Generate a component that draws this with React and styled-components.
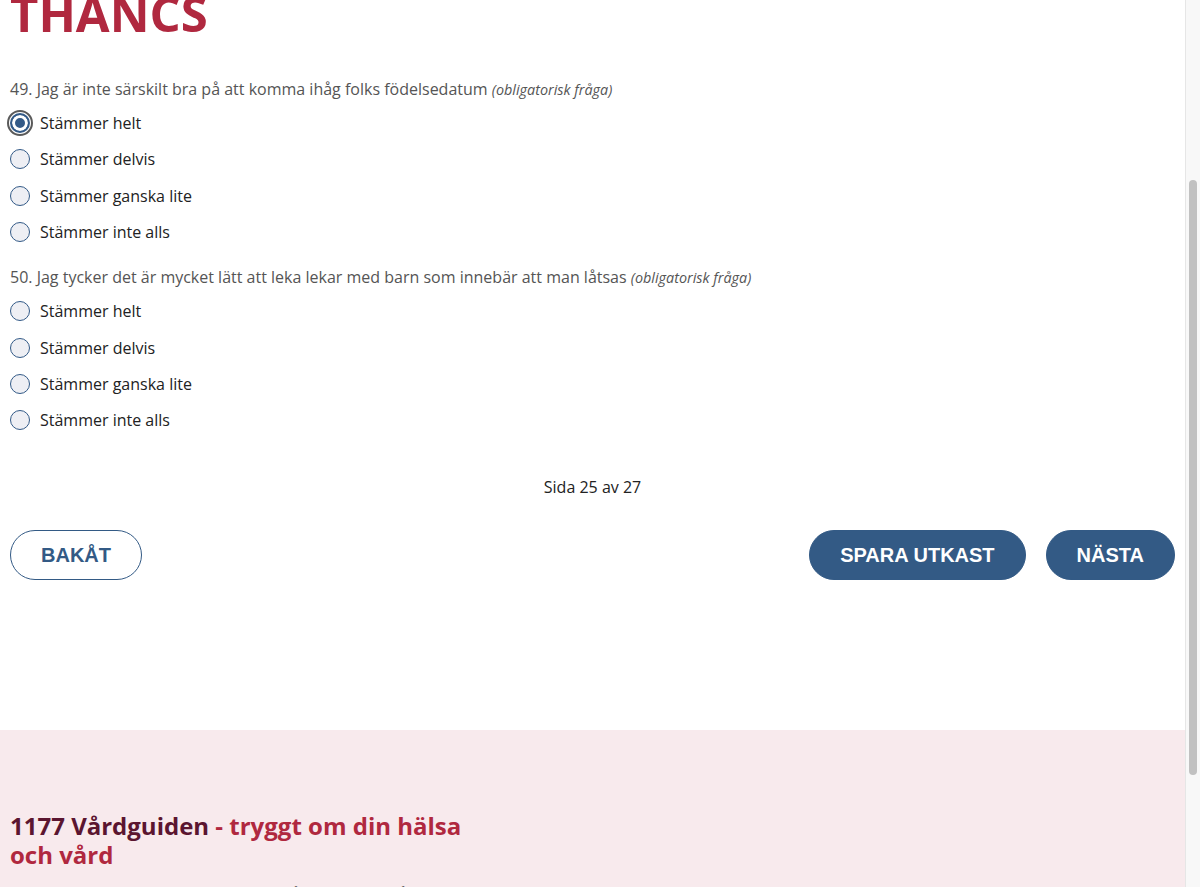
import styled, { createGlobalStyle } from 'styled-components';

const GlobalStyle = createGlobalStyle`
  html, body {
    margin: 0;
    height: 100%;
    overflow: hidden;
    background: #fff;
    font-family: 'Open Sans', 'Liberation Sans', sans-serif;
  }
  * { box-sizing: border-box; }
`;

const questions = [
  {
    number: 49,
    text: 'Jag är inte särskilt bra på att komma ihåg folks födelsedatum',
    selected: 0,
  },
  {
    number: 50,
    text: 'Jag tycker det är mycket lätt att leka lekar med barn som innebär att man låtsas',
    selected: -1,
  },
];

const options = ['Stämmer helt', 'Stämmer delvis', 'Stämmer ganska lite', 'Stämmer inte alls'];

const App = () => {
  return (
    <>
      <GlobalStyle />
      <Viewport>
        <Main>
          <Title>THANCS</Title>
          {questions.map((q, qi) => (
            <Question key={q.number} $first={qi === 0}>
              <Legend>
                {q.number}. {q.text} <Required>(obligatorisk fråga)</Required>
              </Legend>
              {options.map((opt, i) => (
                <Option key={opt}>
                  <Radio $checked={q.selected === i} />
                  <span>{opt}</span>
                </Option>
              ))}
            </Question>
          ))}
          <Pager>Sida 25 av 27</Pager>
          <Actions>
            <Button $variant='outline'>BAKÅT</Button>
            <Spacer />
            <Button>SPARA UTKAST</Button>
            <Button>NÄSTA</Button>
          </Actions>
        </Main>
        <Footer>
          <FooterTitle>
            <Brand>1177 Vårdguiden</Brand> - tryggt om din hälsa och vård
          </FooterTitle>
          <FooterText>
            Information, tjänster och inspiration så att du kan må bättre
          </FooterText>
        </Footer>
      </Viewport>
      <Scrollbar>
        <Thumb />
      </Scrollbar>
    </>
  );
};

const Viewport = styled.div`
  width: 1185px;
  height: 887px;
  overflow: hidden;
  display: flex;
  flex-direction: column;
`;

const Main = styled.main`
  display: flow-root;
  padding: 0 10px;
  height: 730px;
  flex: none;
`;

const Title = styled.h1`
  margin: -11px 0 0;
  font-size: 49px;
  line-height: 49px;
  font-weight: 700;
  color: #b0283f;
`;

const Question = styled.fieldset`
  margin: ${(p) => (p.$first ? '40px' : '16px')} 0 0;
  padding: 0;
  border: none;
`;

const Legend = styled.div`
  font-size: 16px;
  line-height: 22px;
  color: #555;
  margin-bottom: 4px;
`;

const Required = styled.em`
  font-size: 14.4px;
`;

const Option = styled.label`
  display: flex;
  align-items: center;
  gap: 10px;
  height: 36.3px;
  font-size: 16px;
  color: #222;
`;

const Radio = styled.span`
  width: 20px;
  height: 20px;
  border-radius: 50%;
  flex: none;
  border: ${(p) => (p.$checked ? '2px solid #335a87' : '1px solid #335a87')};
  background: ${(p) => (p.$checked ? '#335a87' : '#eeeff4')};
  box-shadow: ${(p) => (p.$checked ? 'inset 0 0 0 3px #fff' : 'none')};
  outline: ${(p) => (p.$checked ? '2px solid #5a5a5a' : 'none')};
  outline-offset: 1px;
`;

const Pager = styled.div`
  margin-top: 38px;
  text-align: center;
  font-size: 16px;
  line-height: 22px;
  color: #222;
`;

const Actions = styled.div`
  display: flex;
  align-items: center;
  gap: 20px;
  margin-top: 32px;
`;

const Spacer = styled.div`
  flex: 1;
`;

const Button = styled.button`
  height: 50px;
  padding: 0 30px;
  border-radius: 25px;
  border: 1px solid #335a85;
  background: ${(p) => (p.$variant === 'outline' ? '#fff' : '#335a85')};
  color: ${(p) => (p.$variant === 'outline' ? '#335a85' : '#fff')};
  font-family: 'Liberation Sans', Arial, sans-serif;
  font-weight: 700;
  font-size: 20px;
  cursor: pointer;
`;

const Footer = styled.footer`
  flex: 1;
  background: #f8eaed;
  padding: 81px 10px 0;
`;

const FooterTitle = styled.h2`
  margin: 0;
  max-width: 460px;
  font-size: 24px;
  line-height: 29px;
  font-weight: 700;
  color: #b0283f;
`;

const Brand = styled.span`
  color: #5b1530;
`;

const FooterText = styled.p`
  margin: 13px 0 0;
  font-size: 16px;
  line-height: 24px;
  color: #222;
`;

const Scrollbar = styled.div`
  position: fixed;
  top: 0;
  right: 0;
  width: 15px;
  height: 887px;
  background: #f8f8f8;
  border-left: 1px solid #e6e6e6;
  padding: 180px 3px 0 3px;
`;

const Thumb = styled.div`
  width: 8px;
  height: 595px;
  border-radius: 4px;
  background: #c1c1c1;
`;

export default App;
